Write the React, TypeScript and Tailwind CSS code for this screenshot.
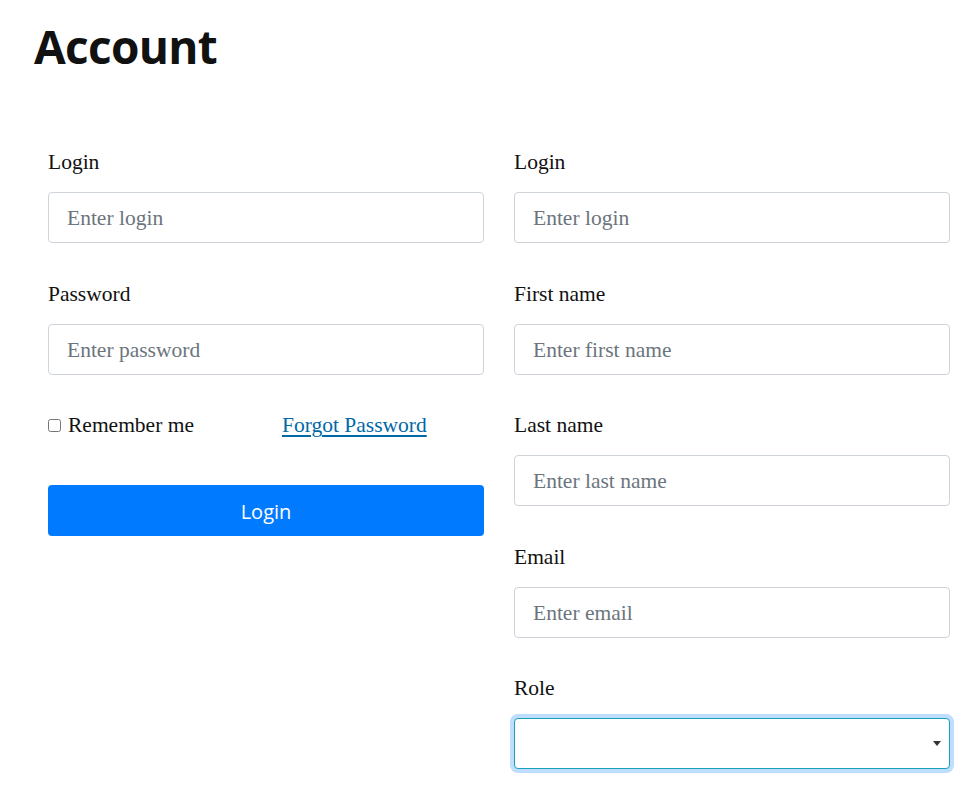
const serif = "font-['Liberation_Serif',serif]";

const Field = ({ label, placeholder, type = "text" }: { label: string; placeholder: string; type?: string }) => {
    return (
        <div className="mb-[34.5px]">
            <label className={`block h-[30px] leading-[32px] text-[21.5px] text-[#111] mb-4 ${serif}`}>{label}</label>
            <input
                type={type}
                placeholder={placeholder}
                className={`block w-full h-[51px] px-[18px] pt-[2px] text-[21.5px] text-[#495057] placeholder:text-[#6c757d] bg-white border border-[#ced4da] rounded-[4px] outline-none ${serif}`}
            />
        </div>
    );
};

const App = () => {
    return (
        <div className="min-h-screen bg-white pl-[34px] pt-[14px]">
            <h1 className="font-['Open_Sans',sans-serif] font-bold text-[46px] leading-[64px] tracking-[-0.7px] text-[#111]">Account</h1>
            <div className="ml-[14px] mt-[68px] w-[902px] grid grid-cols-2 gap-x-[30px]">
                <div>
                    <Field label="Login" placeholder="Enter login" />
                    <Field label="Password" placeholder="Enter password" type="password" />
                    <div className={`flex items-center h-[30px] pt-[3px] text-[21.5px] ${serif}`}>
                        <label className="flex items-center text-[#111] w-[234px]">
                            <input type="checkbox" className="w-[13px] h-[13px] mr-[7px]" />
                            Remember me
                        </label>
                        <a href="#" className="text-[#0069a8] underline underline-offset-[3px]">Forgot Password</a>
                    </div>
                    <button className="mt-[46px] w-full h-[51px] rounded-[4px] bg-[#007bff] text-white text-[20px] pt-[2px] font-['Open_Sans',sans-serif]">
                        Login
                    </button>
                </div>
                <div>
                    <Field label="Login" placeholder="Enter login" />
                    <Field label="First name" placeholder="Enter first name" />
                    <Field label="Last name" placeholder="Enter last name" />
                    <Field label="Email" placeholder="Enter email" type="email" />
                    <div>
                        <label className={`block h-[30px] leading-[32px] text-[21.5px] text-[#111] mb-4 ${serif}`}>Role</label>
                        <div className="relative">
                            <select className={`block w-full h-[51px] px-[18px] appearance-none bg-white border border-[#17a2b8] rounded-[4px] outline-none shadow-[0_0_0_4px_rgba(0,123,255,0.25)] text-[21.5px] ${serif}`}>
                                <option></option>
                            </select>
                            <svg className="absolute right-[9px] top-[23px] pointer-events-none" width="8" height="5" viewBox="0 0 8 5">
                                <path d="M0 0 L8 0 L4 5 Z" fill="#333" />
                            </svg>
                        </div>
                    </div>
                </div>
            </div>
        </div>
    );
};

export default App;
